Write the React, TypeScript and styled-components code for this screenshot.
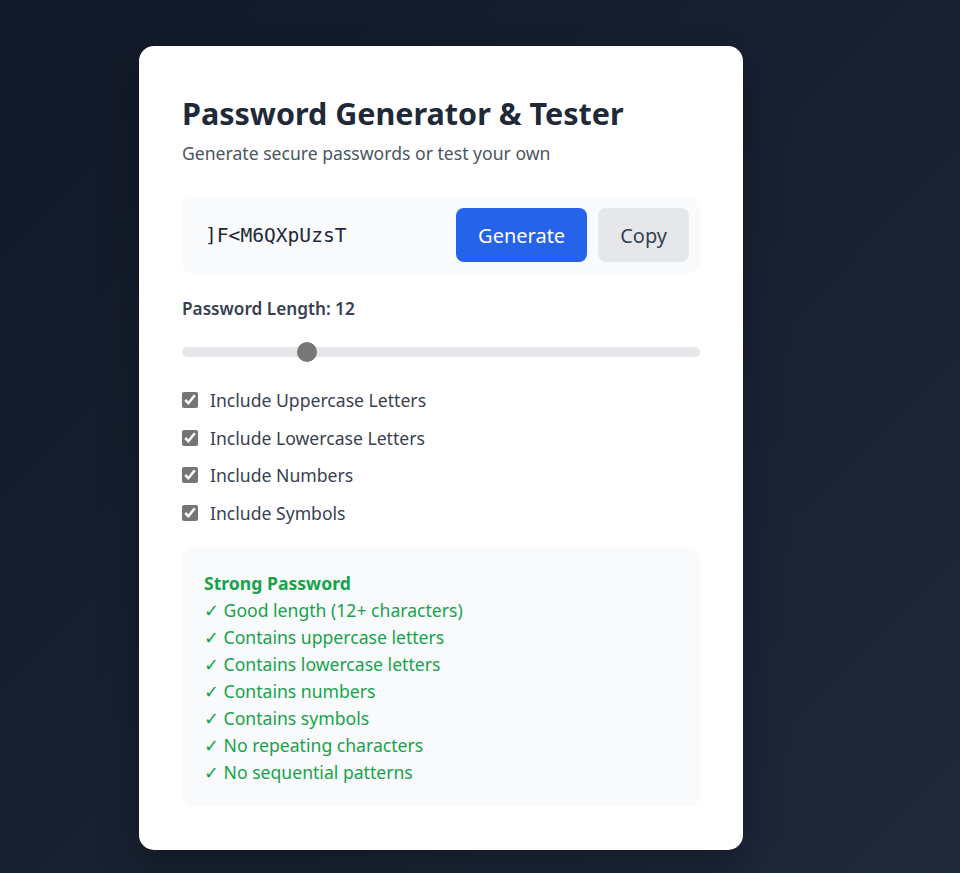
import React, { useState } from "react";
import styled, { createGlobalStyle } from "styled-components";

const Global = createGlobalStyle`
  html, body { margin: 0; padding: 0; }
  body {
    min-height: 873px;
    background: linear-gradient(135deg, #111827 0%, #1e293b 100%);
    font-family: "Noto Sans", "Open Sans", sans-serif;
  }
`;

const Page = styled.div`
  padding: 46px 0 23px 139px;
`;

const Card = styled.div`
  width: 604px;
  box-sizing: border-box;
  background: #ffffff;
  border-radius: 15px;
  padding: 49px 43px 44px;
  box-shadow: 0 20px 40px rgba(0, 0, 0, 0.25);
`;

const Title = styled.h1`
  margin: 0;
  font-size: 30.5px;
  line-height: 36px;
  font-weight: 700;
  color: #1f2937;
`;

const Subtitle = styled.p`
  margin: 9px 0 0;
  font-size: 17.6px;
  line-height: 26px;
  color: #4b5563;
`;

const OutputBox = styled.div`
  margin-top: 31px;
  display: flex;
  align-items: center;
  gap: 11px;
  background: #f8fafc;
  border-radius: 10px;
  padding: 11px;
`;

const PasswordText = styled.div`
  flex: 1;
  padding-left: 12px;
  font-family: "DejaVu Sans Mono", "Liberation Mono", monospace;
  font-size: 19.6px;
  color: #1f2937;
`;

const Button = styled.button<{ $primary?: boolean }>`
  height: 54px;
  padding: 0 22px;
  border: none;
  border-radius: 8px;
  font-family: inherit;
  font-size: 20px;
  cursor: pointer;
  background: ${(p) => (p.$primary ? "#2563eb" : "#e5e7eb")};
  color: ${(p) => (p.$primary ? "#ffffff" : "#374151")};
`;

const LengthLabel = styled.div`
  margin-top: 24px;
  font-size: 17.2px;
  line-height: 24px;
  font-weight: 600;
  color: #374151;
`;

const Slider = styled.input`
  -webkit-appearance: none;
  appearance: none;
  display: block;
  width: 100%;
  height: 10px;
  margin: 26px 0 0;
  border-radius: 5px;
  background: #e5e7eb;
  outline: none;
  &::-webkit-slider-thumb {
    -webkit-appearance: none;
    width: 20px;
    height: 20px;
    border-radius: 50%;
    background: #777777;
    cursor: pointer;
  }
`;

const Options = styled.div`
  margin-top: 30px;
  display: flex;
  flex-direction: column;
  gap: 11.6px;
`;

const Option = styled.label`
  display: flex;
  align-items: center;
  gap: 12px;
  font-size: 17.6px;
  line-height: 26px;
  color: #374151;
  cursor: pointer;
`;

const Check = styled.input`
  margin: 0;
  width: 16px;
  height: 16px;
  accent-color: #757575;
`;

const Strength = styled.div`
  margin-top: 22px;
  background: #f8fafc;
  border-radius: 10px;
  padding: 22px 22px 20px;
`;

const StrengthTitle = styled.div`
  font-size: 17.6px;
  line-height: 27px;
  font-weight: 700;
  color: #16a34a;
`;

const StrengthItem = styled.div`
  font-size: 17.6px;
  line-height: 27px;
  color: #16a34a;
`;

const options = [
  "Include Uppercase Letters",
  "Include Lowercase Letters",
  "Include Numbers",
  "Include Symbols",
];

const checks = [
  "Good length (12+ characters)",
  "Contains uppercase letters",
  "Contains lowercase letters",
  "Contains numbers",
  "Contains symbols",
  "No repeating characters",
  "No sequential patterns",
];

export default function App() {
  const [length, setLength] = useState(12);
  const [opts, setOpts] = useState([true, true, true, true]);
  return (
    <>
      <Global />
      <Page>
        <Card>
          <Title>Password Generator &amp; Tester</Title>
          <Subtitle>Generate secure passwords or test your own</Subtitle>
          <OutputBox>
            <PasswordText>]F&lt;M6QXpUzsT</PasswordText>
            <Button $primary>Generate</Button>
            <Button>Copy</Button>
          </OutputBox>
          <LengthLabel>Password Length: {length}</LengthLabel>
          <Slider
            type="range"
            min={6}
            max={32}
            value={length}
            onChange={(e) => setLength(Number(e.target.value))}
          />
          <Options>
            {options.map((o, i) => (
              <Option key={o}>
                <Check
                  type="checkbox"
                  checked={opts[i]}
                  onChange={() =>
                    setOpts(opts.map((v, j) => (j === i ? !v : v)))
                  }
                />
                {o}
              </Option>
            ))}
          </Options>
          <Strength>
            <StrengthTitle>Strong Password</StrengthTitle>
            {checks.map((c) => (
              <StrengthItem key={c}>✓ {c}</StrengthItem>
            ))}
          </Strength>
        </Card>
      </Page>
    </>
  );
}
